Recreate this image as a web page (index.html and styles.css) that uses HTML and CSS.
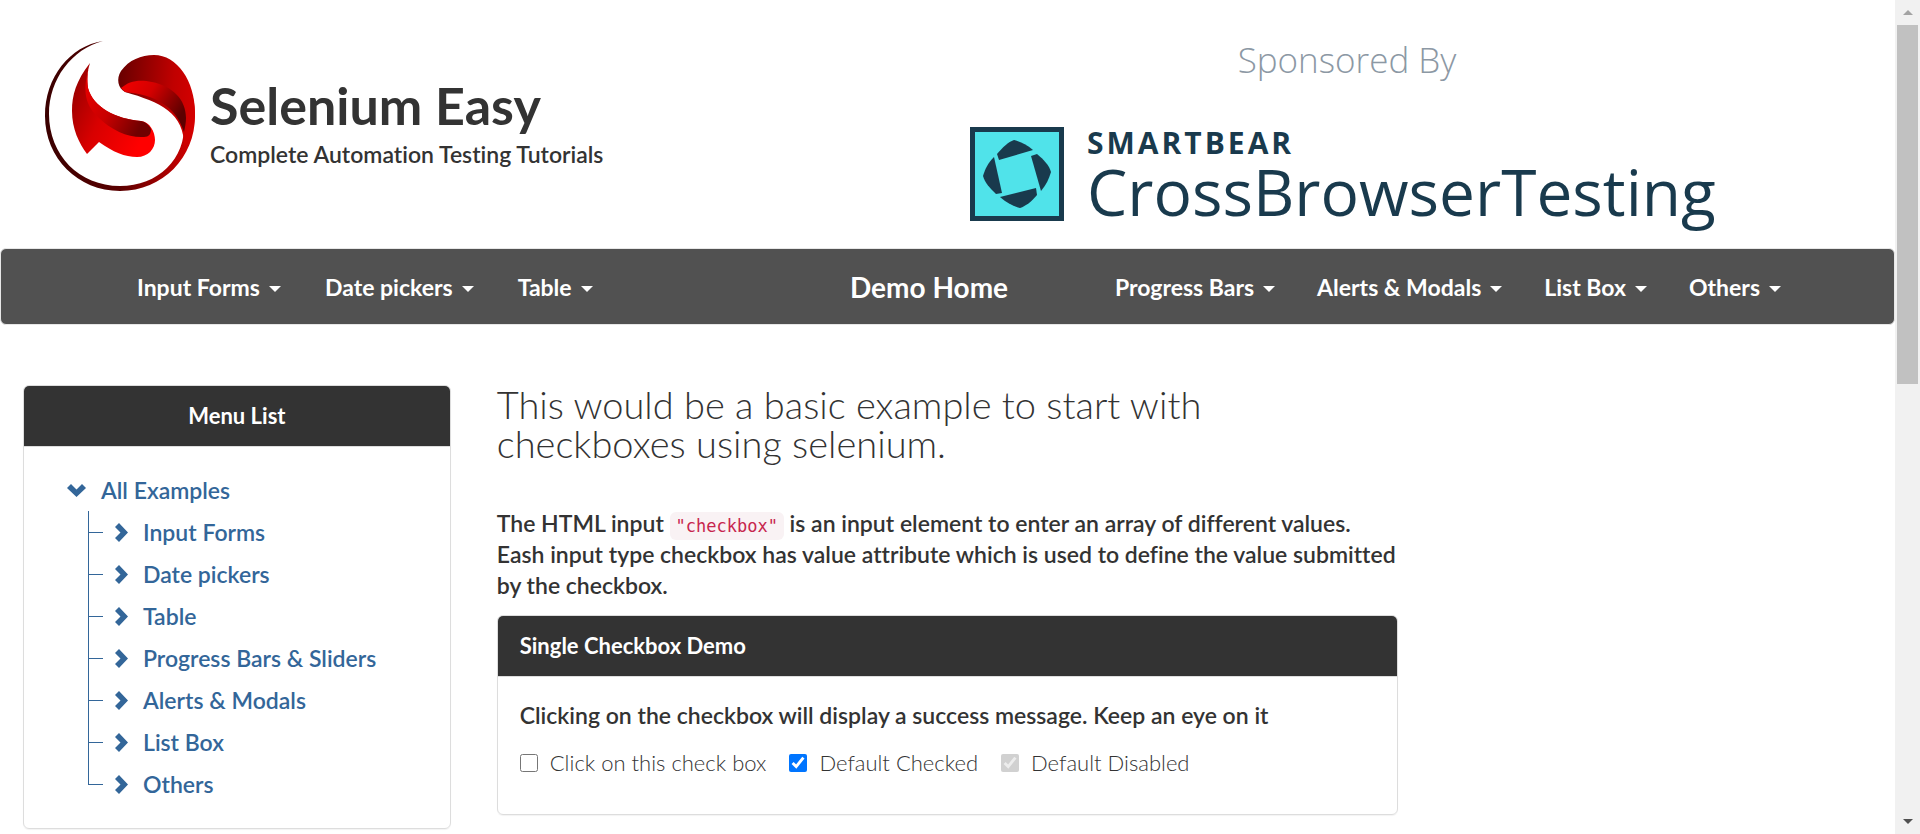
FILE: index.html
```html
<!DOCTYPE html>
<html lang="en">
<head>
<meta charset="utf-8">
<meta name="viewport" content="width=device-width, initial-scale=1">
<title>Selenium Easy - Checkbox demo</title>
<link rel="stylesheet" href="styles.css">
</head>
<body>
<div class="window">
  <div class="page">
    <header class="header">
      <a class="brand" href="#">
        <svg class="brand-logo" viewBox="0 0 150 150" aria-hidden="true">
          <defs>
            <linearGradient id="ring" x1="0" y1="0" x2="1" y2="0">
              <stop offset="0" stop-color="#3a0000"/><stop offset=".5" stop-color="#5a0000"/><stop offset="1" stop-color="#d80000"/>
            </linearGradient>
            <linearGradient id="cap" x1="0" y1=".4" x2="1" y2=".5">
              <stop offset="0" stop-color="#6a0000"/><stop offset=".7" stop-color="#c00000"/><stop offset="1" stop-color="#d40000"/>
            </linearGradient>
            <linearGradient id="fold" x1="0" y1="0" x2="1" y2=".5">
              <stop offset="0" stop-color="#f40000"/><stop offset=".45" stop-color="#d40000"/><stop offset="1" stop-color="#5c0000"/>
            </linearGradient>
            <linearGradient id="leaf" x1="0" y1="0" x2="1" y2=".5">
              <stop offset="0" stop-color="#8a0000"/><stop offset=".5" stop-color="#d80000"/><stop offset="1" stop-color="#ff0000"/>
            </linearGradient>
            <linearGradient id="inner" x1="0" y1="0" x2="1" y2=".6">
              <stop offset="0" stop-color="#f00000"/><stop offset=".55" stop-color="#c80000"/><stop offset="1" stop-color="#700000"/>
            </linearGradient>
          </defs>
          <path fill="url(#ring)" d="M58 0C25 5 0 36 0 75c0 42 33 75 75 75 43 0 75-34 75-75 0-8-1-17-4-25l-7 32c2 36-26 63-64 63C34 145 4 114 4 73 4 38 27 8 58 0z"/>
          <path fill="url(#cap)" d="M80 51C73 47 71 38 76 30c8-11 20-16 33-16 23 0 41 26 41 58 0 12-4 24-11 34 1-34-24-45-59-55z"/>
          <path fill="url(#fold)" d="M76 47c8-7 18-9 31-6 20 4 34 17 34 36 0 5-1 9-2 14-8-26-29-37-59-40z"/>
          <path fill="url(#leaf)" d="M45 22C31 40 27 54 27 70c0 18 7 32 15 43l12-12c14 10 26 15 38 15 11 0 18-8 18-17 0-8-5-18-14-19-25-2-48-14-53-33-1-8-1-16 2-25z"/>
          <path fill="url(#inner)" d="M45 22c-7 24-7 40 8 54 14 14 31 21 46 20 5 0 7-3 7-8-2-4-5-7-10-8-25-2-48-14-53-33-1-8-1-16 2-25z"/>
        </svg>
        <span class="brand-text">
          <span class="brand-name">Selenium Easy</span>
          <span class="brand-tagline">Complete Automation Testing Tutorials</span>
        </span>
      </a>
      <a class="sponsor" href="#">
        <span class="sponsor-label">Sponsored By</span>
        <span class="sponsor-row">
          <svg class="sponsor-logo" viewBox="0 0 94 94" aria-hidden="true">
            <rect width="94" height="94" fill="#193a4d"/>
            <rect x="5" y="5" width="84" height="84" fill="#50e3ea"/>
            <g fill="#193a4d">
              <path d="M27 27C33 20 38 15 44 13c7 2 13 5 19 10L29 33z"/>
              <path d="M67 27C74 33 79 38 81 45c-2 7-5 13-10 19L61 29z"/>
              <path d="M67 68C61 75 56 79 50 81c-7-2-13-5-20-11l36-9z"/>
              <path d="M26 67C20 61 15 56 13 49c2-7 5-13 11-19l8 36z"/>
            </g>
          </svg>
          <span class="sponsor-text">
            <span class="sponsor-company">SMARTBEAR</span>
            <span class="sponsor-product">CrossBrowserTesting</span>
          </span>
        </span>
      </a>
    </header>

    <nav class="navbar">
      <ul class="nav-list nav-left">
        <li><a class="nav-link" href="#">Input Forms<span class="caret"></span></a></li>
        <li><a class="nav-link" href="#">Date pickers<span class="caret"></span></a></li>
        <li><a class="nav-link" href="#">Table<span class="caret"></span></a></li>
      </ul>
      <a class="nav-home" href="#">Demo Home</a>
      <ul class="nav-list nav-right">
        <li><a class="nav-link" href="#">Progress Bars<span class="caret"></span></a></li>
        <li><a class="nav-link" href="#">Alerts &amp; Modals<span class="caret"></span></a></li>
        <li><a class="nav-link" href="#">List Box<span class="caret"></span></a></li>
        <li><a class="nav-link" href="#">Others<span class="caret"></span></a></li>
      </ul>
    </nav>

    <div class="columns">
      <aside class="column">
        <section class="panel">
          <h2 class="panel-heading panel-heading-center">Menu List</h2>
          <div class="tree">
            <a class="tree-root" href="#"><svg class="chevron-down" viewBox="0 0 19 13" aria-hidden="true"><path d="M0 4 4 0l5.500 5.500L15 0l4 4-9.500 9z"/></svg>All Examples</a>
            <ul class="tree-list">
              <li class="tree-item"><span class="branch"></span><a class="tree-link" href="#"><svg class="chevron-right" viewBox="0 0 13 19" aria-hidden="true"><path d="M4 0 0 4l5.500 5.500L0 15l4 4 9-9.500z"/></svg>Input Forms</a></li>
              <li class="tree-item"><span class="branch"></span><a class="tree-link" href="#"><svg class="chevron-right" viewBox="0 0 13 19" aria-hidden="true"><path d="M4 0 0 4l5.500 5.500L0 15l4 4 9-9.500z"/></svg>Date pickers</a></li>
              <li class="tree-item"><span class="branch"></span><a class="tree-link" href="#"><svg class="chevron-right" viewBox="0 0 13 19" aria-hidden="true"><path d="M4 0 0 4l5.500 5.500L0 15l4 4 9-9.500z"/></svg>Table</a></li>
              <li class="tree-item"><span class="branch"></span><a class="tree-link" href="#"><svg class="chevron-right" viewBox="0 0 13 19" aria-hidden="true"><path d="M4 0 0 4l5.500 5.500L0 15l4 4 9-9.500z"/></svg>Progress Bars &amp; Sliders</a></li>
              <li class="tree-item"><span class="branch"></span><a class="tree-link" href="#"><svg class="chevron-right" viewBox="0 0 13 19" aria-hidden="true"><path d="M4 0 0 4l5.500 5.500L0 15l4 4 9-9.500z"/></svg>Alerts &amp; Modals</a></li>
              <li class="tree-item"><span class="branch"></span><a class="tree-link" href="#"><svg class="chevron-right" viewBox="0 0 13 19" aria-hidden="true"><path d="M4 0 0 4l5.500 5.500L0 15l4 4 9-9.500z"/></svg>List Box</a></li>
              <li class="tree-item"><span class="branch"></span><a class="tree-link" href="#"><svg class="chevron-right" viewBox="0 0 13 19" aria-hidden="true"><path d="M4 0 0 4l5.500 5.500L0 15l4 4 9-9.500z"/></svg>Others</a></li>
            </ul>
          </div>
        </section>
      </aside>

      <main class="column">
        <h1 class="title">This would be a basic example to start with<br>checkboxes using selenium.</h1>
        <p class="intro">The HTML input <code class="code">"checkbox"</code> is an input element to enter an array of different values.<br>Eash input type checkbox has value attribute which is used to define the value submitted<br>by the checkbox.</p>
        <section class="panel">
          <h2 class="panel-heading">Single Checkbox Demo</h2>
          <div class="panel-body">
            <p class="hint">Clicking on the checkbox will display a success message. Keep an eye on it</p>
            <div class="checks">
              <label class="check"><input class="box" type="checkbox">Click on this check box</label>
              <label class="check"><input class="box" type="checkbox" checked>Default Checked</label>
              <label class="check"><input class="box" type="checkbox" checked disabled>Default Disabled</label>
            </div>
          </div>
        </section>
      </main>
    </div>
  </div>

  <div class="scrollbar" aria-hidden="true">
    <span class="arrow arrow-up"></span>
    <span class="thumb"></span>
    <span class="arrow arrow-down"></span>
  </div>
</div>
</body>
</html>
```

FILE: styles.css
```css
* {
  box-sizing: border-box;
}

body {
  margin: 0;
  background: #fff;
  color: #333;
  font-family: Lato, "Open Sans", sans-serif;
  font-size: 23px;
  font-weight: 600;
  font-variant-ligatures: none;
  line-height: 30px;
}

a {
  color: inherit;
  text-decoration: none;
}

ul {
  list-style: none;
  margin: 0;
  padding: 0;
}

h1,
h2,
p {
  margin: 0;
}

.window {
  display: flex;
  height: 100vh;
  overflow: hidden;
}

.page {
  flex: 1;
  min-width: 0;
}

/* Header */

.header {
  display: grid;
  grid-template-columns: 1fr 1fr;
  padding-top: 41px;
  padding-left: 45px;
  height: 248px;
}

.brand {
  display: flex;
  gap: 15px;
}

.brand-logo {
  width: 150px;
  height: 150px;
}

.brand-text {
  display: flex;
  flex-direction: column;
  padding-top: 33px;
}

.brand-name {
  font-size: 52px;
  font-weight: 700;
  line-height: 62px;
}

.brand-tagline {
  line-height: 36px;
}

.sponsor {
  display: flex;
  flex-direction: column;
  width: 754px;
  font-family: "Open Sans", "Noto Sans", sans-serif;
}

.sponsor-label {
  color: #8c98a4;
  font-size: 35px;
  font-weight: 300;
  line-height: 38px;
  text-align: center;
}

.sponsor-row {
  display: flex;
  gap: 23px;
  padding-top: 48px;
  color: #193a4d;
}

.sponsor-logo {
  flex: none;
  width: 94px;
  height: 94px;
}

.sponsor-text {
  display: flex;
  flex-direction: column;
}

.sponsor-company {
  font-size: 30px;
  font-weight: 700;
  letter-spacing: 3px;
  line-height: 32px;
}

.sponsor-product {
  font-size: 64px;
  font-weight: 400;
  line-height: 66px;
}

/* Navigation bar */

.navbar {
  display: grid;
  grid-template-columns: 849px auto 1fr;
  align-items: center;
  min-height: 77px;
  border: 1px solid #e7e7e7;
  border-radius: 6px;
  background: #515151;
  color: #fff;
  font-weight: 700;
}

.nav-list {
  display: flex;
  gap: 44px;
}

.nav-left {
  padding-left: 136px;
}

.nav-right {
  gap: 42px;
  justify-content: flex-end;
  padding-right: 113px;
}

.nav-link {
  display: flex;
  align-items: center;
  gap: 9px;
}

.nav-home {
  font-size: 28px;
}

.caret {
  margin-top: 4px;
  border: 6px solid transparent;
  border-top-color: #fff;
  border-bottom: 0;
}

/* Columns */

.columns {
  display: grid;
  grid-template-columns: 1fr 2fr 1fr;
  align-items: start;
  padding-top: 60px;
}

.column {
  padding: 0 23px;
}

.panel {
  border: 1px solid #ddd;
  border-radius: 6px;
  box-shadow: 0 1px 1px rgba(0, 0, 0, .05);
}

.panel-heading {
  padding: 15px 22px;
  border-bottom: 1px solid #ddd;
  border-radius: 5px 5px 0 0;
  background: #333;
  background-clip: padding-box;
  color: #fff;
  font-size: 22px;
  font-weight: 700;
  line-height: 30px;
}

.panel-heading-center {
  text-align: center;
}

/* Example tree */

.tree {
  padding: 22px 22px 23px 43px;
  color: #369;
}

.tree-root {
  display: flex;
  align-items: center;
  gap: 15px;
  height: 42px;
}

.chevron-down {
  width: 19px;
  height: 13px;
  fill: currentColor;
}

.chevron-right {
  width: 13px;
  height: 19px;
  fill: currentColor;
}

.tree-list {
  padding-left: 21px;
}

.tree-item {
  display: flex;
  gap: 12px;
  height: 42px;
}

.branch {
  display: flex;
  flex-direction: column;
  width: 15px;
}

.branch::before {
  content: "";
  height: 21px;
  border-left: 1px solid #369;
  border-bottom: 1px solid #369;
}

.branch::after {
  content: "";
  flex: 1;
  border-left: 1px solid #369;
}

.tree-item:last-child .branch::after {
  display: none;
}

.tree-link {
  display: flex;
  align-items: center;
  gap: 15px;
}

/* Main content */

.title {
  font-size: 38px;
  font-weight: 300;
  line-height: 39px;
}

.intro {
  padding: 45px 0 14px;
  line-height: 31px;
}

.code {
  padding: 4px 6px;
  border-radius: 6px;
  background: #f9f2f4;
  color: #c7254e;
  font-family: "DejaVu Sans Mono", monospace;
  font-size: 17px;
  font-weight: 400;
  line-height: 1;
}

.panel-body {
  padding: 22px 22px 36px;
}

.hint {
  line-height: 32px;
}

.checks {
  display: flex;
  gap: 23px;
  padding-top: 17px;
}

.check {
  display: flex;
  align-items: center;
  gap: 12px;
  font-size: 22px;
  font-weight: 300;
}

.box {
  width: 18px;
  height: 18px;
  margin: 0;
  accent-color: #0075ff;
}

/* Window scrollbar */

.scrollbar {
  display: flex;
  flex-direction: column;
  align-items: center;
  width: 25px;
  padding: 10px 0;
  background: #f1f1f1;
}

.arrow {
  border: 5px solid transparent;
}

.arrow-up {
  border-top: 0;
  border-bottom-color: #a3a3a3;
}

.arrow-down {
  margin-top: auto;
  border-bottom: 0;
  border-top-color: #505050;
}

.thumb {
  width: 21px;
  height: 43vh;
  margin-top: 10px;
  background: #c1c1c1;
}
```
